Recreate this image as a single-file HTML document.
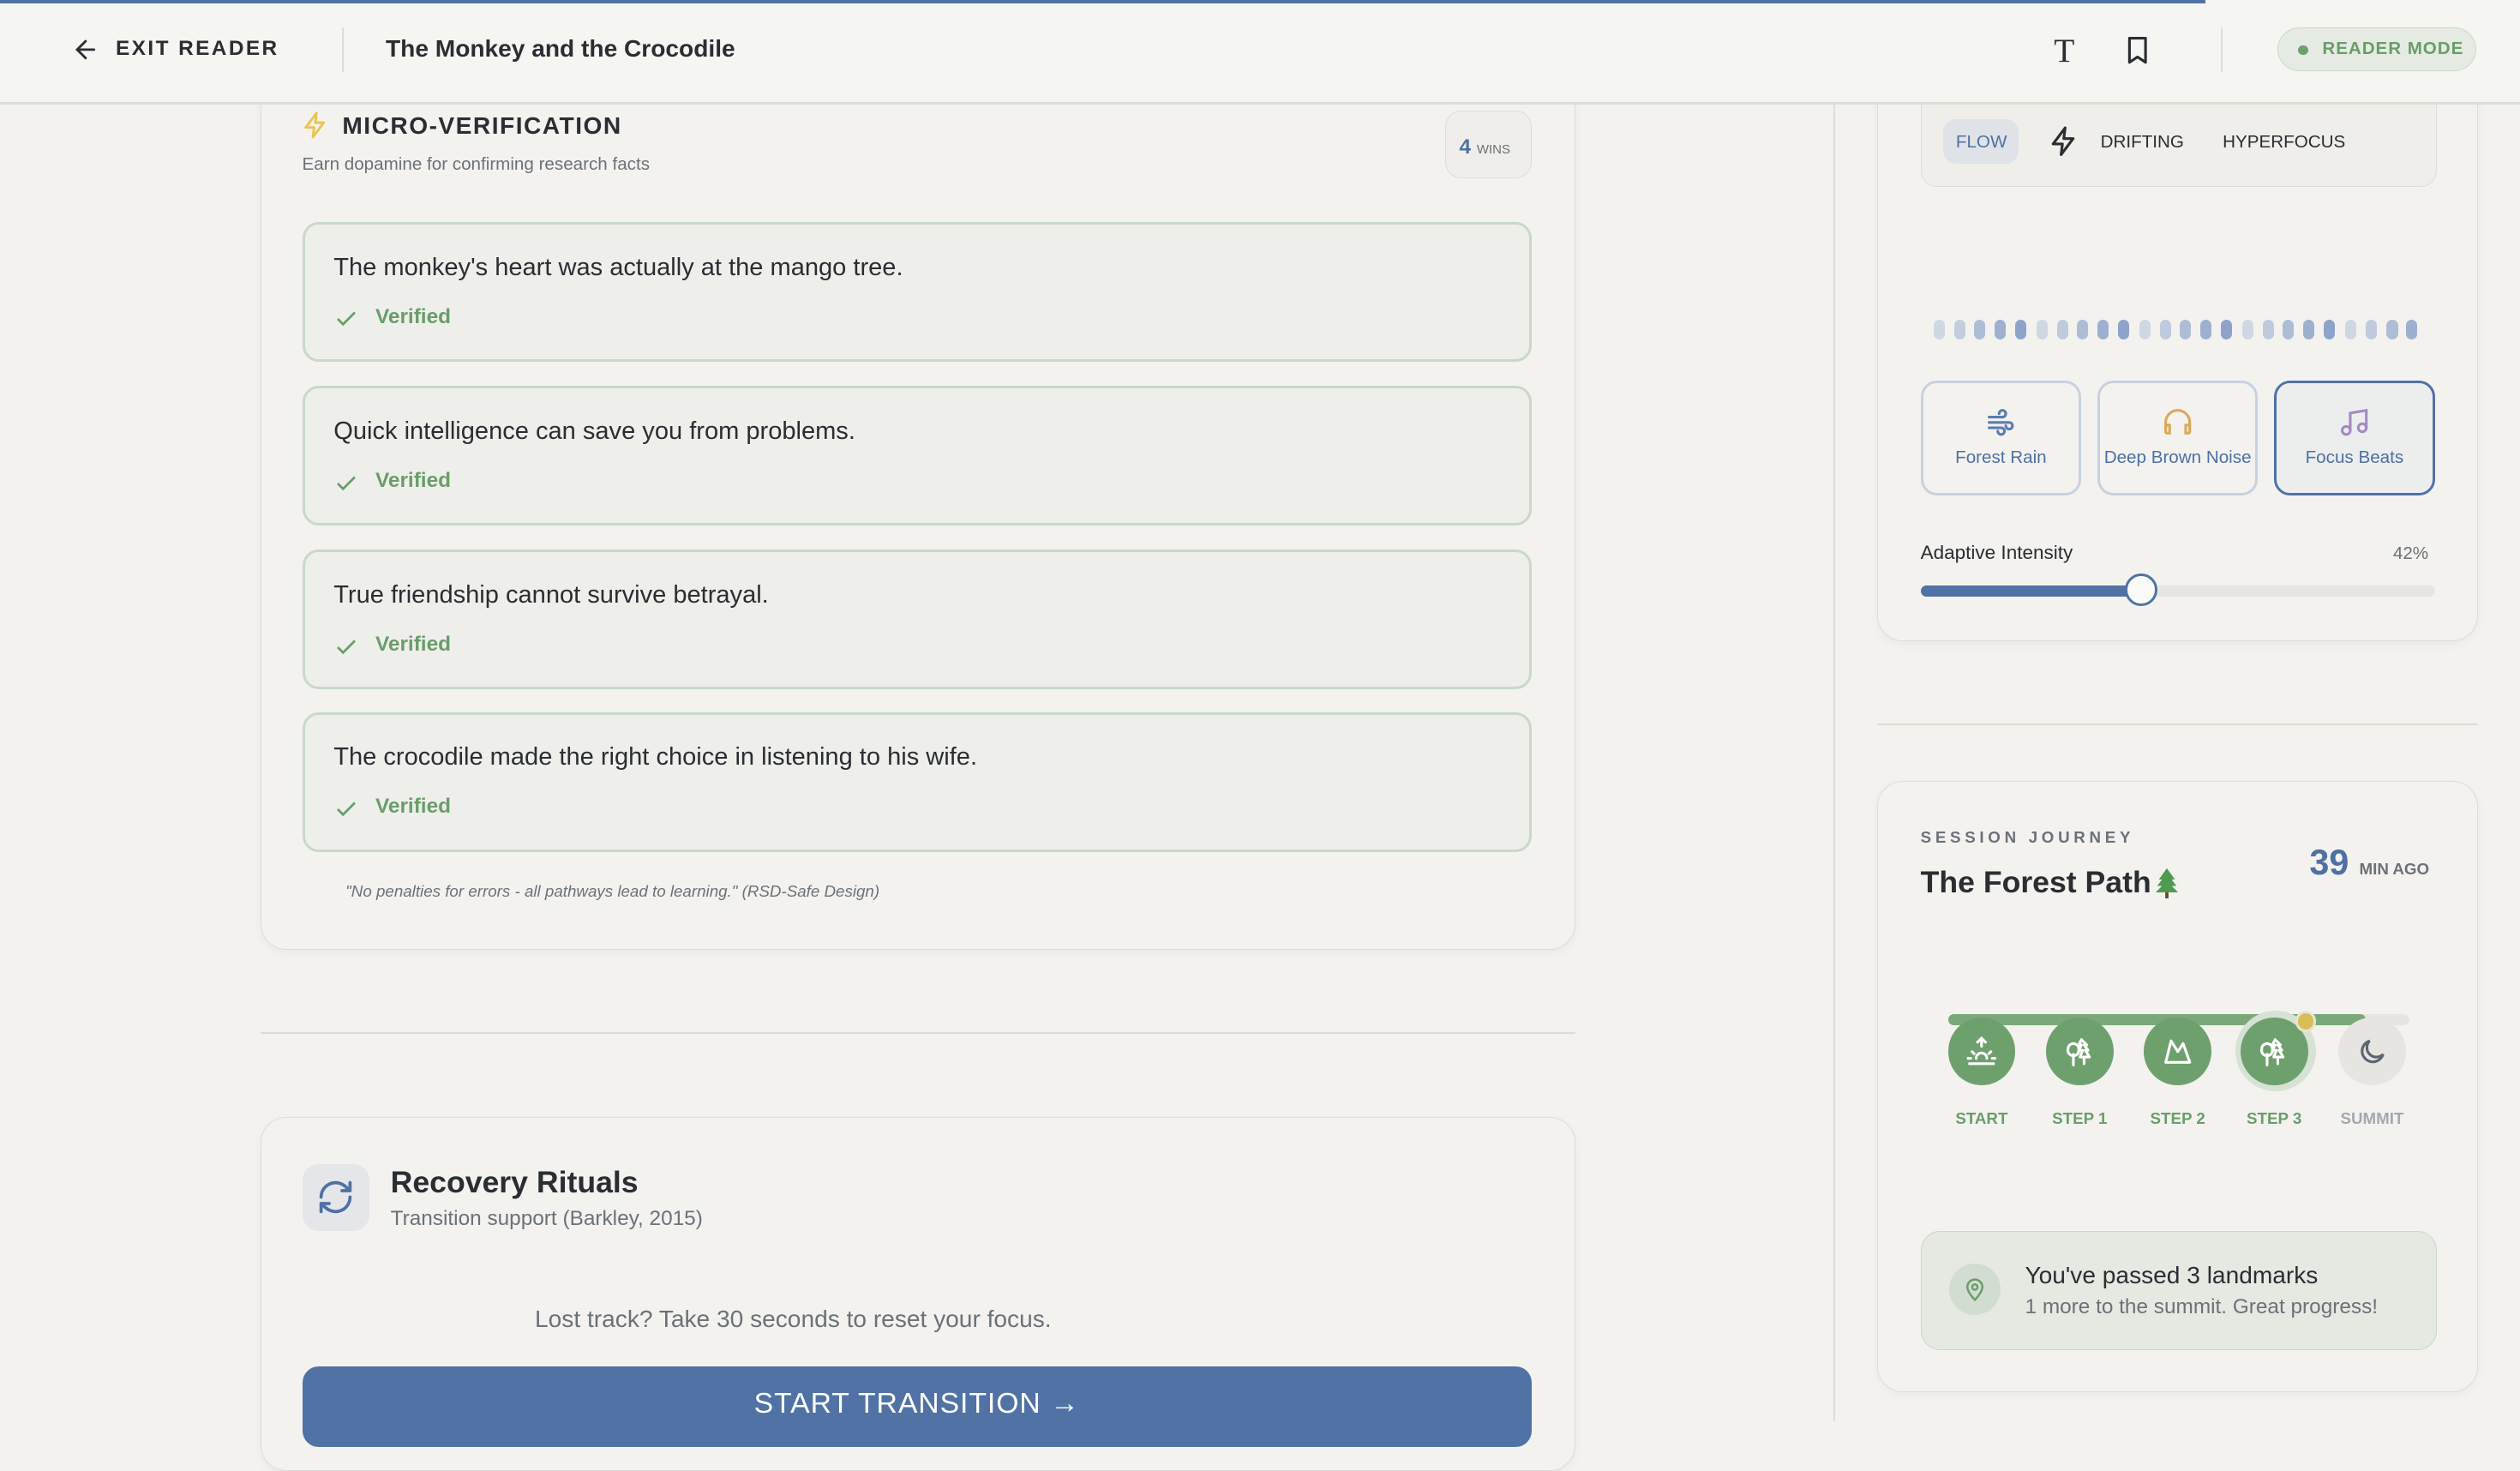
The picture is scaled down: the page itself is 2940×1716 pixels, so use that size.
<!DOCTYPE html>
<html><head><meta charset="utf-8"><style>
html{zoom:1.875}
body{margin:0;width:1568px;height:884px;overflow:hidden;background:#f3f2ef;font-family:"Liberation Sans",sans-serif;color:#2a2d31;position:relative}
.a{position:absolute}
.hwrap{position:absolute;left:0;top:0;width:1568px;height:65px;z-index:20}
.hdr{left:0;top:0;width:1568px;height:65px;background:#f5f5f2;border-bottom:2px solid #dedcd6;box-sizing:border-box}
.card{background:#f3f2ef;border:1px solid #dedcd6;border-radius:16px;box-shadow:0 2px 6px rgba(0,0,0,.04);box-sizing:border-box}
.item{left:188px;width:765px;height:87px;border:2px solid #c9d8c8;border-radius:10px;background:#eeefeb;box-sizing:border-box}
.item .t{position:absolute;left:18px;top:18px;font-size:15.5px;color:#2a2d31}
.item .v{position:absolute;left:44px;top:50px;font-size:13px;font-weight:bold;color:#6a9d6a}
.item svg{position:absolute;left:18px;top:51px}
.snd{top:237px;width:100px;height:71px;border:2px solid #c7d1e0;border-radius:10px;box-sizing:border-box;text-align:center;font-size:11px;color:#4f70a3}
.snd svg{display:block;margin:14px auto 6px}
.circ{width:42px;height:42px;border-radius:50%;background:#6ea06e;top:633px}
.circ svg{position:absolute;left:11px;top:11px}
.lbl{top:690px;font-size:10px;font-weight:bold;color:#6a9d6a;width:60px;text-align:center}
.dot{top:199px;width:7px;height:12px;border-radius:4px}
</style></head><body>
<div class="hwrap">
<div class="a hdr"></div>
<div class="a" style="left:0;top:0;width:1372px;height:2px;background:#5072a5"></div>
<svg class="a" style="left:44px;top:22px" width="18" height="18" viewBox="0 0 24 24" fill="none" stroke="#2a2d31" stroke-width="2" stroke-linecap="round"><path d="M19 12H5M12 5l-7 7 7 7"/></svg>
<div class="a" style="left:72px;top:23px;font-size:13px;font-weight:bold;letter-spacing:1.3px">EXIT READER</div>
<div class="a" style="left:213px;top:17px;width:1px;height:28px;background:#dedcd6"></div>
<div class="a" style="left:240px;top:22px;font-size:15px;font-weight:bold">The Monkey and the Crocodile</div>
<div class="a" style="left:1278px;top:19px;font-size:21px;font-family:'Liberation Serif',serif">T</div>
<svg class="a" style="left:1320px;top:20px" width="20" height="22" viewBox="0 0 24 24" fill="none" stroke="#2a2d31" stroke-width="2" stroke-linejoin="round"><path d="M6 3h12v18l-6-4-6 4z"/></svg>
<div class="a" style="left:1382px;top:17px;width:1px;height:28px;background:#dedcd6"></div>
<div class="a" style="left:1417px;top:17px;width:124px;height:27px;border:1px solid #c9d8c8;background:#e5ebe2;border-radius:14px;box-sizing:border-box"></div>
<div class="a" style="left:1430px;top:28px;width:6px;height:6px;border-radius:50%;background:#6ea06e"></div>
<div class="a" style="left:1445px;top:24px;font-size:11px;font-weight:bold;color:#6a9d6a;letter-spacing:.5px">READER MODE</div>
</div>

<div class="a" style="left:1141px;top:65px;width:1px;height:819px;background:#dedcd6"></div>

<!-- left card -->
<div class="a card" style="left:162px;top:40px;width:818px;height:551px"></div>
<svg class="a" style="left:187px;top:69px" width="18" height="18" viewBox="0 0 24 24" fill="none" stroke="#e8c44e" stroke-width="2" stroke-linejoin="round"><path d="M13 2L4 14h7l-1 8 9-12h-7z"/></svg>
<div class="a" style="left:213px;top:70px;font-size:15px;font-weight:bold;letter-spacing:.8px">MICRO-VERIFICATION</div>
<div class="a" style="left:188px;top:96px;font-size:11px;color:#6b7178">Earn dopamine for confirming research facts</div>
<div class="a" style="left:899px;top:69px;width:54px;height:42px;border:1px solid #dedcd6;border-radius:10px;background:#efeeea;box-sizing:border-box"></div>
<div class="a" style="left:908px;top:84px;font-size:13px;font-weight:bold;color:#4f70a3">4 <span style="font-size:8px;color:#6b7178;font-weight:normal">WINS</span></div>

<div class="a item" style="top:138px"><div class="t">The monkey's heart was actually at the mango tree.</div><svg width="16" height="16" viewBox="0 0 24 24" fill="none" stroke="#6a9d6a" stroke-width="2.2"><path d="M4 12l5 5L20 6"/></svg><div class="v">Verified</div></div>
<div class="a item" style="top:240px"><div class="t">Quick intelligence can save you from problems.</div><svg width="16" height="16" viewBox="0 0 24 24" fill="none" stroke="#6a9d6a" stroke-width="2.2"><path d="M4 12l5 5L20 6"/></svg><div class="v">Verified</div></div>
<div class="a item" style="top:342px"><div class="t">True friendship cannot survive betrayal.</div><svg width="16" height="16" viewBox="0 0 24 24" fill="none" stroke="#6a9d6a" stroke-width="2.2"><path d="M4 12l5 5L20 6"/></svg><div class="v">Verified</div></div>
<div class="a item" style="top:443px"><div class="t">The crocodile made the right choice in listening to his wife.</div><svg width="16" height="16" viewBox="0 0 24 24" fill="none" stroke="#6a9d6a" stroke-width="2.2"><path d="M4 12l5 5L20 6"/></svg><div class="v">Verified</div></div>
<div class="a" style="left:215px;top:549px;font-size:10px;font-style:italic;color:#6b7178">"No penalties for errors - all pathways lead to learning." (RSD-Safe Design)</div>

<div class="a" style="left:162px;top:642px;width:818px;height:1px;background:#dedcd6"></div>

<!-- recovery -->
<div class="a card" style="left:162px;top:695px;width:818px;height:220px"></div>
<div class="a" style="left:188px;top:724px;width:42px;height:42px;border-radius:10px;background:#e4e6ea"></div>
<svg class="a" style="left:197px;top:733px" width="24" height="24" viewBox="0 0 24 24" fill="none" stroke="#4f70a3" stroke-width="2" stroke-linecap="round" stroke-linejoin="round"><path d="M3 12a9 9 0 0 1 15-6.7L21 8M21 3v5h-5M21 12a9 9 0 0 1-15 6.7L3 16M3 21v-5h5"/></svg>
<div class="a" style="left:243px;top:725px;font-size:19px;font-weight:bold">Recovery Rituals</div>
<div class="a" style="left:243px;top:751px;font-size:13px;color:#6b7178">Transition support (Barkley, 2015)</div>
<div class="a" style="left:162px;top:812px;width:663px;text-align:center;font-size:15px;color:#6b7178">Lost track? Take 30 seconds to reset your focus.</div>
<div class="a" style="left:188px;top:850px;width:765px;height:50px;border-radius:10px;background:#5072a5"></div>
<div class="a" style="left:188px;top:863px;width:765px;text-align:center;font-size:18px;color:#fff;letter-spacing:.5px">START TRANSITION →</div>

<!-- right top card -->
<div class="a card" style="left:1168px;top:30px;width:374px;height:369px"></div>
<div class="a" style="left:1195px;top:40px;width:321px;height:76px;border:1px solid #dedcd6;border-radius:10px;background:#efeeea;box-sizing:border-box"></div>
<div class="a" style="left:1209px;top:74px;width:47px;height:28px;border-radius:8px;background:#dfe3e8"></div>
<div class="a" style="left:1217px;top:82px;font-size:11px;color:#4f70a3">FLOW</div>
<svg class="a" style="left:1274px;top:78px" width="20" height="20" viewBox="0 0 24 24" fill="none" stroke="#2a2d31" stroke-width="2" stroke-linejoin="round"><path d="M13 2L4 14h7l-1 8 9-12h-7z"/></svg>
<div class="a" style="left:1307px;top:82px;font-size:11px">DRIFTING</div>
<div class="a" style="left:1383px;top:82px;font-size:11px">HYPERFOCUS</div>

<div class="a dot" style="left:1203px;background:#cfd7e3"></div><div class="a dot" style="left:1216px;background:#c2cde0"></div><div class="a dot" style="left:1228px;background:#aebdd6"></div><div class="a dot" style="left:1241px;background:#9db0d0"></div><div class="a dot" style="left:1254px;background:#8ea3c9"></div><div class="a dot" style="left:1267px;background:#cfd7e3"></div><div class="a dot" style="left:1280px;background:#bfcadc"></div><div class="a dot" style="left:1292px;background:#aebdd6"></div><div class="a dot" style="left:1305px;background:#9db0d0"></div><div class="a dot" style="left:1318px;background:#8ea3c9"></div><div class="a dot" style="left:1331px;background:#cfd7e3"></div><div class="a dot" style="left:1344px;background:#bfcadc"></div><div class="a dot" style="left:1356px;background:#aebdd6"></div><div class="a dot" style="left:1369px;background:#9db0d0"></div><div class="a dot" style="left:1382px;background:#8ea3c9"></div><div class="a dot" style="left:1395px;background:#cfd7e3"></div><div class="a dot" style="left:1408px;background:#bfcadc"></div><div class="a dot" style="left:1420px;background:#aebdd6"></div><div class="a dot" style="left:1433px;background:#9db0d0"></div><div class="a dot" style="left:1446px;background:#8ea3c9"></div><div class="a dot" style="left:1459px;background:#cfd7e3"></div><div class="a dot" style="left:1472px;background:#bfcadc"></div><div class="a dot" style="left:1485px;background:#aebdd6"></div><div class="a dot" style="left:1497px;background:#9db0d0"></div>

<div class="a snd" style="left:1195px"><svg width="22" height="20" viewBox="0 0 24 24" fill="none" stroke="#5b7cb0" stroke-width="2" stroke-linecap="round"><path d="M3 8h10a2.5 2.5 0 1 0-2.5-2.5M3 12h15a2.5 2.5 0 1 1-2.5 2.5M3 16h9a2.5 2.5 0 1 1-2.5 2.5"/></svg>Forest Rain</div>
<div class="a snd" style="left:1305px"><svg width="22" height="20" viewBox="0 0 24 24" fill="none" stroke="#dba95a" stroke-width="2" stroke-linecap="round"><path d="M3 18v-6a9 9 0 0 1 18 0v6M3 14h3v6H4a1 1 0 0 1-1-1zM21 14h-3v6h2a1 1 0 0 0 1-1z"/></svg>Deep Brown Noise</div>
<div class="a snd" style="left:1415px;border-color:#5072a5;background:#eceeee"><svg width="22" height="20" viewBox="0 0 24 24" fill="none" stroke="#a48ac2" stroke-width="2"><path d="M9 18V5l12-2v13"/><circle cx="6" cy="18" r="3"/><circle cx="18" cy="16" r="3"/></svg>Focus Beats</div>

<div class="a" style="left:1195px;top:337px;font-size:12px">Adaptive Intensity</div>
<div class="a" style="left:1489px;top:338px;font-size:11px;color:#6b7178">42%</div>
<div class="a" style="left:1195px;top:364px;width:320px;height:7px;border-radius:4px;background:#e6e5e1"></div>
<div class="a" style="left:1195px;top:364px;width:140px;height:7px;border-radius:4px;background:#5072a5"></div>
<div class="a" style="left:1322px;top:357px;width:17px;height:17px;border-radius:50%;background:#fafaf8;border:2px solid #5072a5"></div>

<div class="a" style="left:1168px;top:450px;width:374px;height:1px;background:#dedcd6"></div>

<!-- journey -->
<div class="a card" style="left:1168px;top:486px;width:374px;height:380px"></div>
<div class="a" style="left:1195px;top:515px;font-size:10px;font-weight:bold;letter-spacing:2.5px;color:#6b7178">SESSION JOURNEY</div>
<div class="a" style="left:1195px;top:538px;font-size:19px;font-weight:bold">The Forest Path</div>
<svg class="a" style="left:1340px;top:539px" width="16" height="20" viewBox="0 0 16 20"><path d="M8 1L3 8h2L2 12h3L1 16h14l-4-4h3L11 8h2z" fill="#4e9a4e"/><rect x="7" y="16" width="2" height="4" fill="#6b4a2b"/></svg>
<div class="a" style="left:1437px;top:524px;font-size:22px;font-weight:bold;color:#4f70a3">39</div>
<div class="a" style="left:1468px;top:535px;font-size:10px;font-weight:bold;color:#6b7178">MIN AGO</div>

<div class="a" style="left:1212px;top:631px;width:287px;height:7px;border-radius:4px;background:#e6e5e1"></div>
<div class="a" style="left:1212px;top:631px;width:260px;height:7px;border-radius:4px;background:#7aa87a"></div>
<div class="a" style="left:1391px;top:629px;width:50px;height:50px;border-radius:50%;background:#d6e2d4"></div>
<div class="a circ" style="left:1212px"><svg width="20" height="20" viewBox="0 0 24 24" fill="none" stroke="#fff" stroke-width="2" stroke-linecap="round"><path d="M12 2v6M9 5l3-3 3 3M5 12l1.5 1.5M19 12l-1.5 1.5M8 17a4 4 0 0 1 8 0M3 21h18M2 17h2M20 17h2"/></svg></div>
<div class="a circ" style="left:1273px"><svg width="20" height="20" viewBox="0 0 24 24" fill="none" stroke="#fff" stroke-width="2" stroke-linecap="round" stroke-linejoin="round"><path d="M7 22v-8M3 10a4 4 0 0 1 8 0 4 4 0 0 1-4 5 4 4 0 0 1-4-5zM13 3l-2 4h2l-2 4h3l-2 5h7l-3-5h2l-3-4h2zM15 16v5"/></svg></div>
<div class="a circ" style="left:1334px"><svg width="20" height="20" viewBox="0 0 24 24" fill="none" stroke="#fff" stroke-width="2" stroke-linejoin="round"><path d="M3 20L7 4l5 8 4-6 5 14z"/></svg></div>
<div class="a circ" style="left:1394px"><svg width="20" height="20" viewBox="0 0 24 24" fill="none" stroke="#fff" stroke-width="2" stroke-linecap="round" stroke-linejoin="round"><path d="M7 22v-8M3 10a4 4 0 0 1 8 0 4 4 0 0 1-4 5 4 4 0 0 1-4-5zM13 3l-2 4h2l-2 4h3l-2 5h7l-3-5h2l-3-4h2zM15 16v5"/></svg></div>
<div class="a circ" style="left:1455px;background:#e6e5e1"><svg width="20" height="20" viewBox="0 0 24 24" fill="none" stroke="#5c6470" stroke-width="2"><path d="M20 14A8 8 0 1 1 10 4a6 6 0 0 0 10 10z"/></svg></div>
<div class="a" style="left:1428px;top:629px;width:10px;height:10px;border-radius:50%;background:#d9bd55;border:2px solid #e8e5d0"></div>
<div class="a lbl" style="left:1203px">START</div>
<div class="a lbl" style="left:1264px">STEP 1</div>
<div class="a lbl" style="left:1325px">STEP 2</div>
<div class="a lbl" style="left:1385px">STEP 3</div>
<div class="a lbl" style="left:1446px;color:#a4a8ae">SUMMIT</div>

<div class="a" style="left:1195px;top:766px;width:321px;height:74px;border:1px solid #c9d8c8;border-radius:12px;background:#e6e9e2;box-sizing:border-box"></div>
<div class="a" style="left:1213px;top:786px;width:32px;height:32px;border-radius:50%;background:#d1ddd0"></div>
<svg class="a" style="left:1221px;top:793px" width="16" height="18" viewBox="0 0 24 24" fill="none" stroke="#6a9d6a" stroke-width="2"><path d="M12 22s7-7 7-12a7 7 0 0 0-14 0c0 5 7 12 7 12z"/><circle cx="12" cy="10" r="2.5"/></svg>
<div class="a" style="left:1260px;top:785px;font-size:15px">You've passed 3 landmarks</div>
<div class="a" style="left:1260px;top:806px;font-size:13px;color:#6b7178">1 more to the summit. Great progress!</div>
</body></html>
